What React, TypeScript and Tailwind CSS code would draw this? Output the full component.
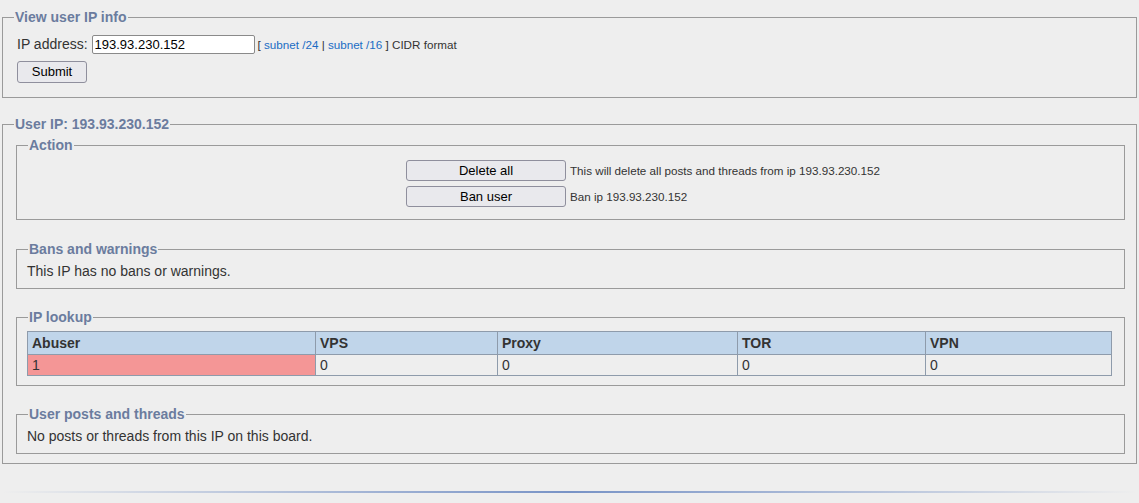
export default function App() {
  const cols = [
    { name: 'Abuser', value: '1', w: 'w-[288px]', hit: true },
    { name: 'VPS', value: '0', w: 'w-[182px]', hit: false },
    { name: 'Proxy', value: '0', w: 'w-[240px]', hit: false },
    { name: 'TOR', value: '0', w: 'w-[188px]', hit: false },
    { name: 'VPN', value: '0', w: 'w-[186px]', hit: false },
  ]

  return (
    <div className="min-h-[503px] bg-[#eeeeee] px-[2px] pt-[9px] font-['Liberation_Sans',Arial,sans-serif] text-[#333]">
      {/* Lookup form */}
      <fieldset className="border border-[#9a9a9a] pl-[14px] pr-[14px] pb-[14px]">
        <legend className="-ml-[3px] px-[1px] text-[14px] leading-[16px] font-bold text-[#6b7c9e]">View user IP info</legend>
        <div className="mt-[10px] flex items-center gap-[3px] h-[19px]">
          <span className="text-[14px] mr-[1px]">IP address:</span>
          <input
            defaultValue="193.93.230.152"
            className="w-[163px] h-[19px] px-[2px] bg-white border border-[#8a8a8a] rounded-[2px] text-[13px] text-black outline-none"
          />
          <span className="text-[11.65px]">
            [ <a className="text-[#1a6cc4]">subnet /24</a> | <a className="text-[#1a6cc4]">subnet /16</a> ] CIDR format
          </span>
        </div>
        <button className="mt-[7px] w-[70px] h-[22px] bg-[#e9e9ed] border border-[#8f8f9d] rounded-[3px] text-[13px] text-black">
          Submit
        </button>
      </fieldset>

      {/* User IP */}
      <fieldset className="mt-[18px] border border-[#9a9a9a] pl-[13px] pr-[11px] pt-[5px] pb-[9px]">
        <legend className="-ml-[2px] px-[1px] text-[14px] leading-[16px] font-bold text-[#6b7c9e]">User IP: 193.93.230.152</legend>

        <fieldset className="border border-[#9a9a9a] pt-[7px] pb-[12px]">
          <legend className="ml-[11px] px-[1px] text-[14px] leading-[16px] font-bold text-[#6b7c9e]">Action</legend>
          <div className="pl-[389px] grid grid-cols-[160px_auto] gap-y-[5px] gap-x-[4px] items-center">
            <button className="h-[21px] bg-[#e9e9ed] border border-[#8f8f9d] rounded-[3px] text-[13px] text-black">Delete all</button>
            <span className="text-[11.65px]">This will delete all posts and threads from ip 193.93.230.152</span>
            <button className="h-[21px] bg-[#e9e9ed] border border-[#8f8f9d] rounded-[3px] text-[13px] text-black">Ban user</button>
            <span className="text-[11.65px]">Ban ip 193.93.230.152</span>
          </div>
        </fieldset>

        <fieldset className="mt-[21px] border border-[#9a9a9a] pl-[10px] pt-[6px] pb-[8px]">
          <legend className="ml-[1px] px-[1px] text-[14px] leading-[16px] font-bold text-[#6b7c9e]">Bans and warnings</legend>
          <p className="text-[14px] leading-[17px]">This IP has no bans or warnings.</p>
        </fieldset>

        <fieldset className="mt-[20px] border border-[#9a9a9a] pl-[10px] pr-[12px] pt-[6px] pb-[9px]">
          <legend className="ml-[1px] px-[1px] text-[14px] leading-[16px] font-bold text-[#6b7c9e]">IP lookup</legend>
          <table className="w-full table-fixed border-collapse text-[14px] leading-[16px]">
            <thead>
              <tr className="bg-[#c0d5ea]">
                {cols.map(c => (
                  <th key={c.name} className={`${c.w} h-[23px] border border-[#8e9bab] px-[4px] align-middle text-left font-bold text-[#333]`}>{c.name}</th>
                ))}
              </tr>
            </thead>
            <tbody>
              <tr>
                {cols.map(c => (
                  <td key={c.name} className={`h-[21px] border border-[#8e9bab] px-[4px] align-middle text-left ${c.hit ? 'bg-[#f49696]' : ''}`}>{c.value}</td>
                ))}
              </tr>
            </tbody>
          </table>
        </fieldset>

        <fieldset className="mt-[20px] border border-[#9a9a9a] pl-[10px] pt-[6px] pb-[8px]">
          <legend className="ml-[1px] px-[1px] text-[14px] leading-[16px] font-bold text-[#6b7c9e]">User posts and threads</legend>
          <p className="text-[14px] leading-[17px]">No posts or threads from this IP on this board.</p>
        </fieldset>
      </fieldset>

      <div className="mt-[27px] h-[2px] w-full bg-gradient-to-r from-transparent via-[#7893c6] to-transparent" />
    </div>
  )
}
